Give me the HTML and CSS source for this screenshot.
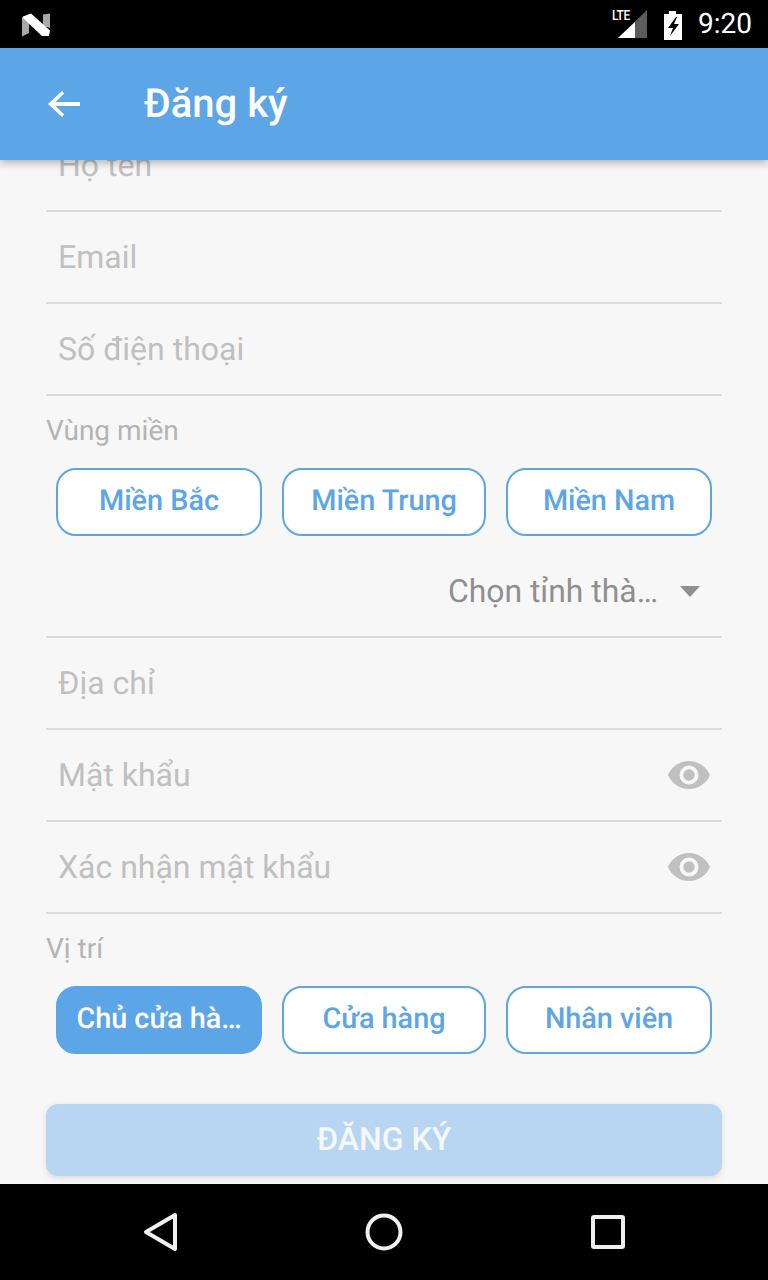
FILE: index.html
```html
<!DOCTYPE html>
<html lang="vi">
<head>
<meta charset="utf-8">
<title>Đăng ký</title>
<link rel="stylesheet" href="styles.css">
</head>
<body>
<div class="screen">
  <div class="status">
    <svg class="n-logo" width="30" height="24" viewBox="0 0 30 24"><path d="M1 4.500 8 1.500 8 20 1 23.500Z" fill="#a8a8a8"/><path d="M22 1.500 29 0.500 29 15 22 13Z" fill="#a8a8a8"/><path d="M2 3.500 10 0.500 29 17.500 28 23 21 23 2 5Z" fill="#fff"/></svg>
    <div class="status-right">
      <span class="lte">LTE</span>
      <svg class="signal" width="30" height="30" viewBox="0 0 30 30"><path d="M29 0V28H0Z" fill="#5c5c5c"/><path d="M17 12V28H0Z" fill="#fff"/></svg>
      <svg class="battery" width="20" height="30" viewBox="0 0 20 30"><path d="M6 1h7v3h6v26H1V4h5Z" fill="#fff"/><path d="M13 7 5 18h5l-3 8 9-12h-5l3-7Z" fill="#000"/></svg>
      <span class="clock">9:20</span>
    </div>
  </div>
  <header class="appbar">
    <svg class="back" width="36" height="36" viewBox="0 0 36 36"><path d="M34 16H9.500l8.600-8.600L16 5 2 18l14 13 2.100-2.400L9.500 20H34Z" fill="#fff"/></svg>
    <h1 class="title">Đăng ký</h1>
  </header>
  <main class="content">
    <div class="form">
      <div class="field"><span class="ph">Họ tên</span></div>
      <div class="field"><span class="ph">Email</span></div>
      <div class="field"><span class="ph">Số điện thoại</span></div>
      <div class="label">Vùng miền</div>
      <div class="choices">
        <div class="choice">Miền Bắc</div>
        <div class="choice">Miền Trung</div>
        <div class="choice">Miền Nam</div>
      </div>
      <div class="select">
        <span class="select-text">Chọn tỉnh thà…</span>
        <span class="caret"></span>
      </div>
      <div class="field"><span class="ph">Địa chỉ</span></div>
      <div class="field">
        <span class="ph">Mật khẩu</span>
        <svg class="eye" width="44" height="30" viewBox="0 0 44 30"><path fill-rule="evenodd" d="M22 1C12.500 1 4.500 6.800 1 15c3.500 8.200 11.500 14 21 14s17.500-5.800 21-14C39.500 6.800 31.500 1 22 1Zm0 23.500a9.500 9.500 0 1 1 0-19 9.500 9.500 0 0 1 0 19Zm0-15.200a5.700 5.700 0 1 0 0 11.400 5.700 5.700 0 0 0 0-11.400Z" fill="#c0c0c0"/></svg>
      </div>
      <div class="field">
        <span class="ph">Xác nhận mật khẩu</span>
        <svg class="eye" width="44" height="30" viewBox="0 0 44 30"><path fill-rule="evenodd" d="M22 1C12.500 1 4.500 6.800 1 15c3.500 8.200 11.500 14 21 14s17.500-5.800 21-14C39.500 6.800 31.500 1 22 1Zm0 23.500a9.500 9.500 0 1 1 0-19 9.500 9.500 0 0 1 0 19Zm0-15.200a5.700 5.700 0 1 0 0 11.400 5.700 5.700 0 0 0 0-11.400Z" fill="#c0c0c0"/></svg>
      </div>
      <div class="label">Vị trí</div>
      <div class="choices">
        <div class="choice active">Chủ cửa hà…</div>
        <div class="choice">Cửa hàng</div>
        <div class="choice">Nhân viên</div>
      </div>
      <div class="submit">ĐĂNG KÝ</div>
    </div>
  </main>
  <nav class="navbar">
    <svg width="36" height="40" viewBox="0 0 36 40"><path d="M32 3 3 20l29 17Z" fill="none" stroke="#f0f0f0" stroke-width="4" stroke-linejoin="round"/></svg>
    <svg class="home" width="40" height="40" viewBox="0 0 40 40"><circle cx="20" cy="20" r="16.500" fill="none" stroke="#f0f0f0" stroke-width="4"/></svg>
    <svg width="36" height="36" viewBox="0 0 36 36"><rect x="3" y="3" width="30" height="30" rx="1" fill="none" stroke="#f0f0f0" stroke-width="4"/></svg>
  </nav>
</div>
</body>
</html>
```
FILE: styles.css
```css
* { box-sizing: border-box; }
html, body { margin: 0; padding: 0; }
body { font-family: Roboto, "Noto Sans", sans-serif; background: #000; text-rendering: geometricPrecision; }
.screen { width: 768px; height: 1280px; display: flex; flex-direction: column; overflow: hidden; background: #f7f7f7; }
.status { height: 48px; flex: none; background: #000; display: flex; align-items: center; justify-content: space-between; padding: 0 16px 0 21px; }
.n-logo { display: block; margin-top: 1px; }
.status-right { display: flex; align-items: center; position: relative; }
.lte { position: absolute; left: 0; top: 8px; color: #fff; font-size: 14px; font-weight: 500; line-height: 16px; letter-spacing: -0.500px; transform: scaleX(0.85); transform-origin: left; }
.signal { margin-left: 6px; margin-right: 15px; margin-top: 2px; }
.battery { margin-right: 15px; margin-top: 2px; }
.clock { color: #fff; font-size: 28px; line-height: 48px; }
.appbar { height: 112px; flex: none; background: #5ca5e6; display: flex; align-items: center; padding-left: 46px; position: relative; z-index: 2; box-shadow: 0 3px 8px rgba(0,0,0,0.28); }
.back { display: block; }
.title { margin: 0 0 0 62px; color: #fff; font-size: 40px; font-weight: 500; line-height: 48px; opacity: 0.999; }
.content { flex: 1; min-height: 0; overflow: hidden; }
.form { margin-top: -40px; padding: 0 46px; opacity: 0.999; }
.field { height: 92px; border-bottom: 2px solid #dcdcdc; display: flex; align-items: center; justify-content: space-between; padding: 0 12px; }
.ph { color: #c0c0c0; font-size: 32px; line-height: 40px; }
.eye { display: block; margin-right: -1px; }
.label { color: #b4b4b4; font-size: 28px; line-height: 36px; margin-top: 17px; }
.choices { display: grid; grid-template-columns: 206px 204px 206px; gap: 20px; padding: 0 10px; margin-top: 19px; }
.choice { min-width: 0; height: 68px; padding-bottom: 3px; border: 2px solid #5ca5e6; border-radius: 20px; background: #fff; color: #5ca5e6; font-size: 28.800px; font-weight: 500; display: flex; align-items: center; justify-content: center; white-space: nowrap; }
.choice.active { background: #5ca5e6; color: #fff; }
.select { height: 102px; padding-top: 10px; border-bottom: 2px solid #dcdcdc; display: flex; align-items: center; justify-content: flex-end; padding-right: 22px; }
.select-text { color: #8f8f8f; font-size: 31.900px; line-height: 40px; }
.caret { width: 0; height: 0; margin-left: 22px; border-left: 10px solid transparent; border-right: 10px solid transparent; border-top: 11px solid #8f8f8f; }
.submit { height: 72px; margin-top: 50px; padding-bottom: 2px; border-radius: 12px; background: #b8d6f2; color: #f4f8fc; font-size: 32px; font-weight: 500; display: flex; align-items: center; justify-content: center; box-shadow: 0 2px 6px rgba(0,0,0,0.12); }
.navbar { height: 96px; flex: none; background: #000; position: relative; z-index: 2; display: flex; align-items: center; justify-content: space-between; padding: 0 142px 0 143px; }
.home { margin-left: -1px; margin-right: 1px; }
```
